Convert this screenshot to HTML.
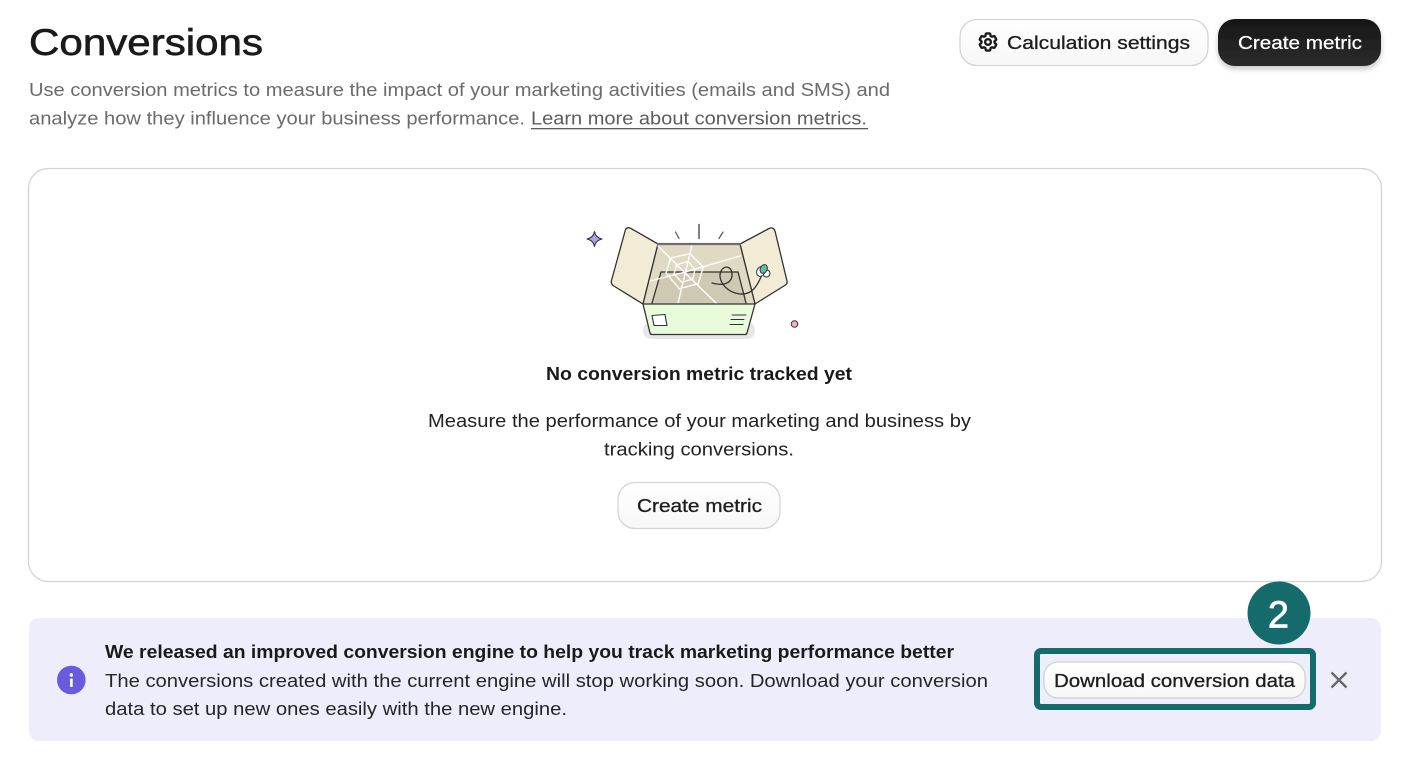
<!DOCTYPE html>
<html>
<head>
<meta charset="utf-8">
<style>
html,body{margin:0;padding:0;background:#fff;width:1420px;height:760px;overflow:hidden}
svg{position:absolute;left:0;top:0;display:block}
text{font-family:"Liberation Sans",sans-serif}
</style>
</head>
<body>
<svg width="1420" height="760" viewBox="0 0 1420 760" xmlns="http://www.w3.org/2000/svg">
<defs>
<linearGradient id="w" x1="0" y1="0" x2="0" y2="1"><stop offset="0" stop-color="#fff"/><stop offset="1" stop-color="#f7f7f7"/></linearGradient>
<linearGradient id="k" x1="0" y1="0" x2="0" y2="1"><stop offset="0" stop-color="#161616"/><stop offset="1" stop-color="#2c2c2c"/></linearGradient>
<filter id="s" x="-20%" y="-40%" width="140%" height="200%"><feDropShadow dx="0" dy="3" stdDeviation="3" flood-color="#000" flood-opacity=".22"/></filter>
</defs>

<!-- header -->
<text x="29" y="55" font-size="37.500" fill="#1a1a1a" stroke="#1a1a1a" stroke-width=".65" textLength="234" lengthAdjust="spacingAndGlyphs">Conversions</text>
<text x="29" y="96" font-size="18.800" fill="#6b6b6b" textLength="861" lengthAdjust="spacingAndGlyphs">Use conversion metrics to measure the impact of your marketing activities (emails and SMS) and</text>
<text x="29" y="124.500" font-size="18.800" fill="#6b6b6b" textLength="496" lengthAdjust="spacingAndGlyphs">analyze how they influence your business performance.</text>
<text x="531" y="124.500" font-size="18.800" fill="#5c5c5c" textLength="336" lengthAdjust="spacingAndGlyphs">Learn more about conversion metrics.</text>
<rect x="531" y="128" width="337" height="1.300" fill="#5c5c5c"/>

<rect x="960" y="19.500" width="248" height="46" rx="17" fill="url(#w)" stroke="#d4d4d4" stroke-width="1.300"/>
<g transform="translate(976.600,30.600) scale(.95)" fill="none" stroke="#1c1c1c" stroke-width="2.500" stroke-linejoin="round">
<path d="M9.594 3.94c.09-.542.56-.94 1.11-.94h2.593c.55 0 1.02.398 1.11.94l.213 1.281c.063.374.313.686.645.87.074.04.147.083.22.127.325.196.72.257 1.075.124l1.217-.456a1.125 1.125 0 0 1 1.37.49l1.296 2.247a1.125 1.125 0 0 1-.26 1.431l-1.003.827c-.293.241-.438.613-.43.992a7.723 7.723 0 0 1 0 .255c-.008.378.137.75.43.991l1.004.827c.424.35.534.955.26 1.43l-1.298 2.247a1.125 1.125 0 0 1-1.369.491l-1.217-.456c-.355-.133-.75-.072-1.076.124a6.47 6.47 0 0 1-.22.128c-.331.183-.581.495-.644.869l-.213 1.281c-.09.543-.56.94-1.11.94h-2.594c-.55 0-1.019-.398-1.11-.94l-.213-1.281c-.062-.374-.312-.686-.644-.87a6.52 6.52 0 0 1-.22-.127c-.325-.196-.72-.257-1.076-.124l-1.217.456a1.125 1.125 0 0 1-1.369-.49l-1.297-2.247a1.125 1.125 0 0 1 .26-1.431l1.004-.827c.292-.24.437-.613.43-.991a6.932 6.932 0 0 1 0-.255c.007-.38-.138-.751-.43-.992l-1.004-.827a1.125 1.125 0 0 1-.26-1.43l1.297-2.247a1.125 1.125 0 0 1 1.37-.491l1.216.456c.356.133.751.072 1.076-.124.072-.044.146-.086.22-.128.332-.183.582-.495.644-.869l.214-1.28Z"/>
<circle cx="12" cy="12" r="3"/>
</g>
<text x="1007" y="49" font-size="18.500" fill="#1c1c1c" stroke="#1c1c1c" stroke-width=".3" textLength="183" lengthAdjust="spacingAndGlyphs">Calculation settings</text>

<rect x="1218" y="19" width="163" height="47" rx="17" fill="url(#k)" filter="url(#s)"/>
<text x="1238" y="49" font-size="18.500" fill="#fff" stroke="#fff" stroke-width=".25" textLength="124" lengthAdjust="spacingAndGlyphs">Create metric</text>

<!-- card -->
<rect x="28.500" y="168.500" width="1353" height="413" rx="20" fill="#fff" stroke="#d2d2d2" stroke-width="1.200"/>

<!-- illustration -->
<g stroke-linejoin="round" stroke-linecap="round">
<rect x="643" y="322" width="112" height="17" rx="8" fill="#e6e6e6"/>
<path d="M631 228.500 658 244 643 304 613 285.500Q610.500 283.500 611.500 280.500L625.500 229.500Q627.500 226.500 631 228.500Z" fill="#f2ecd7" stroke="#333" stroke-width="1.300"/>
<path d="M769 228.500 740 244 755 304 785.500 285Q787.500 283.500 787 281L775 231Q773 226.500 769 228.500Z" fill="#f2ecd7" stroke="#333" stroke-width="1.300"/>
<path d="M658 244H740L755 304H643Z" fill="#e0dac5"/>
<path d="M661 272H738L746 304H652Z" fill="#cfc9b3"/>
<path d="M658 244 643 304M740 244 755 304M661 272H738M661 272 652 303M738 272 746 303" stroke="#333" stroke-width="1.300" fill="none"/>
<path d="M658 244H740" stroke="#6d6d6d" stroke-width="2.200" fill="none"/>
<g stroke="#ffffff" stroke-width="1.400" fill="none">
<path d="M658 246 684.300 272.300 717 304M691.700 246.300 678 303M650 281 684.300 272.300 740 256"/>
<path d="M670.700 258 690 253.700 703.300 267 698.300 283.700 679.300 288.700 666 273Z"/>
<path d="M676.700 264.700 688.300 261.300 695 269.700 692.700 279 681.700 282.300 674 273.700Z"/>
</g>
<path d="M712 283C722 286 731 284 732 276C733 267 725 264 721 271C717 279 725 292 740 294C752 295 757 286 761 277" fill="none" stroke="#333" stroke-width="1.300"/>
<g stroke="#333" stroke-width="1">
<circle cx="766.500" cy="273.500" r="3.500" fill="#fff"/>
<ellipse cx="760.800" cy="271.500" rx="4" ry="5" fill="#fff" transform="rotate(25 760.800 271.500)"/>
<ellipse cx="763.700" cy="269" rx="3.400" ry="4.600" fill="#5fbfa6" transform="rotate(25 763.700 269)"/>
</g>
<path d="M643 304H755L747 333Q746.500 334.500 745 334.500H652Q650.500 334.500 650 333Z" fill="#e8fcdc" stroke="#333" stroke-width="1.300"/>
<path d="M652 315.500 665 314.500 667 325.500H654Z" fill="#fff" stroke="#333" stroke-width="1.100"/>
<path d="M732 315H746M731 319.500H744M730 324.500H743" stroke="#333" stroke-width="1.100" fill="none"/>
<path d="M699 224.500V238.500" stroke="#555" stroke-width="1.500"/>
<path d="M675.500 232 679 238.500M723 232 719 238.500" stroke="#555" stroke-width="1.200"/>
<path d="M594.500 231.500Q595.500 237.500 602 239Q595.500 240.500 594.500 246.500Q593.500 240.500 587 239Q593.500 237.500 594.500 231.500Z" fill="#a7a2ea" stroke="#333" stroke-width="1"/>
<circle cx="794.500" cy="324" r="3.300" fill="#f3b1c4" stroke="#333" stroke-width="1"/>
</g>

<!-- empty state -->
<text x="546" y="380" font-size="18" font-weight="bold" fill="#1a1a1a" textLength="306" lengthAdjust="spacingAndGlyphs">No conversion metric tracked yet</text>
<text x="428" y="427" font-size="18.800" fill="#222" textLength="543" lengthAdjust="spacingAndGlyphs">Measure the performance of your marketing and business by</text>
<text x="604" y="455.500" font-size="18.800" fill="#222" textLength="190" lengthAdjust="spacingAndGlyphs">tracking conversions.</text>
<rect x="618" y="482.500" width="162" height="46" rx="17" fill="url(#w)" stroke="#d4d4d4" stroke-width="1.300"/>
<text x="637" y="512" font-size="18.500" fill="#1c1c1c" stroke="#1c1c1c" stroke-width=".3" textLength="125" lengthAdjust="spacingAndGlyphs">Create metric</text>

<!-- banner -->
<rect x="29" y="618" width="1352" height="123" rx="10" fill="#eeedfb"/>
<circle cx="71.300" cy="680" r="14.300" fill="#6a5ade"/>
<rect x="70" y="678.500" width="2.700" height="8.500" rx=".8" fill="#fff"/>
<circle cx="71.300" cy="675" r="1.700" fill="#fff"/>
<text x="105" y="658" font-size="18" font-weight="bold" fill="#1a1a1a" textLength="849" lengthAdjust="spacingAndGlyphs">We released an improved conversion engine to help you track marketing performance better</text>
<text x="105" y="687" font-size="18.800" fill="#262626" textLength="883" lengthAdjust="spacingAndGlyphs">The conversions created with the current engine will stop working soon. Download your conversion</text>
<text x="105" y="715" font-size="18.800" fill="#262626" textLength="462" lengthAdjust="spacingAndGlyphs">data to set up new ones easily with the new engine.</text>

<rect x="1044" y="662" width="261" height="36" rx="14" fill="url(#w)" stroke="#cfcfcf" stroke-width="1.200"/>
<text x="1054" y="687" font-size="18.500" fill="#1c1c1c" stroke="#1c1c1c" stroke-width=".3" textLength="241" lengthAdjust="spacingAndGlyphs">Download conversion data</text>
<rect x="1037" y="651" width="276" height="56" rx="4" fill="none" stroke="#156b6b" stroke-width="6"/>
<path d="M1331.500 672.500 1346.500 687.500M1346.500 672.500 1331.500 687.500" stroke="#666" stroke-width="2.300" fill="none"/>

<circle cx="1279" cy="613" r="31.500" fill="#156b6b"/>
<text x="1278.500" y="627.500" font-size="38" fill="#fff" stroke="#fff" stroke-width=".7" text-anchor="middle">2</text>
</svg>
</body>
</html>
